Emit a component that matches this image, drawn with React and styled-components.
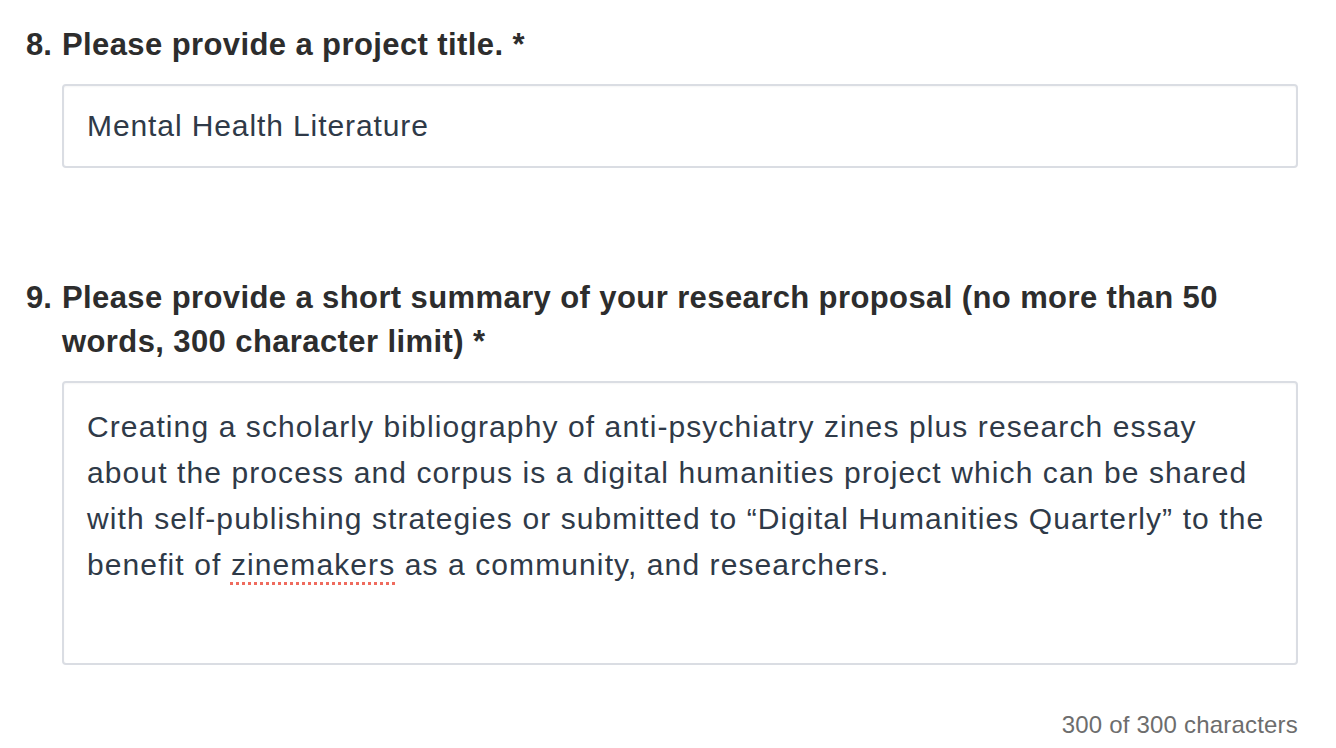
import React from "react";
import styled, { createGlobalStyle } from "styled-components";

const Global = createGlobalStyle`
  html, body { margin: 0; padding: 0; background: #fff; }
  body { font-family: "Liberation Sans", Arial, sans-serif; }
`;

const Page = styled.div`
  width: 1336px;
  height: 748px;
  overflow: hidden;
  box-sizing: border-box;
  padding: 23px 38px 0 26px;
  display: flex;
  flex-direction: column;
`;

const Question = styled.section`
  display: flex;
  flex-direction: column;
  margin-bottom: ${(p) => p.$gap || 0}px;
`;

const Label = styled.div`
  display: flex;
  font-weight: 700;
  font-size: 31px;
  letter-spacing: 0.4px;
  line-height: 44px;
  color: #2d2d2d;
  margin-bottom: 17px;
  padding-right: 24px;
`;

const Num = styled.span`
  flex: 0 0 36px;
  letter-spacing: 0;
`;

const LabelText = styled.span`
  flex: 1;
`;

const Field = styled.div`
  margin-left: 36px;
  box-sizing: border-box;
  border: 2px solid #dadde3;
  border-radius: 4px;
  box-shadow: inset 0 1px 2px rgba(0, 0, 0, 0.04);
  background: #fff;
  color: #2f3a48;
  font-size: 30px;
  letter-spacing: ${(p) => (p.$multi ? "1.1px" : "0.9px")};
  line-height: 46px;
  padding: ${(p) => (p.$multi ? "21px 24px 21px 23px" : "17px 23px")};
  height: ${(p) => p.$h}px;
`;

const Misspelled = styled.span`
  text-decoration: underline dotted #ef6b5e;
  text-decoration-thickness: 3px;
  text-underline-offset: 7px;
`;

const Counter = styled.div`
  text-align: right;
  font-size: 24px;
  letter-spacing: 0.2px;
  line-height: 28px;
  color: #6d6d6d;
  margin-top: 46px;
`;

export default function App() {
  return (
    <Page>
      <Global />
      <Question $gap={108}>
        <Label>
          <Num>8.</Num>
          <LabelText>Please provide a project title. *</LabelText>
        </Label>
        <Field $h={84}>Mental Health Literature</Field>
      </Question>
      <Question>
        <Label>
          <Num>9.</Num>
          <LabelText>
            Please provide a short summary of your research proposal (no more than 50 words, 300 character limit) *
          </LabelText>
        </Label>
        <Field $multi $h={284}>
          Creating a scholarly bibliography of anti-psychiatry zines plus research essay about the process and corpus is a digital humanities project which can be shared with self-publishing strategies or submitted to “Digital Humanities Quarterly” to the benefit of <Misspelled>zinemakers</Misspelled> as a community, and researchers.
        </Field>
        <Counter>300 of 300 characters</Counter>
      </Question>
    </Page>
  );
}
